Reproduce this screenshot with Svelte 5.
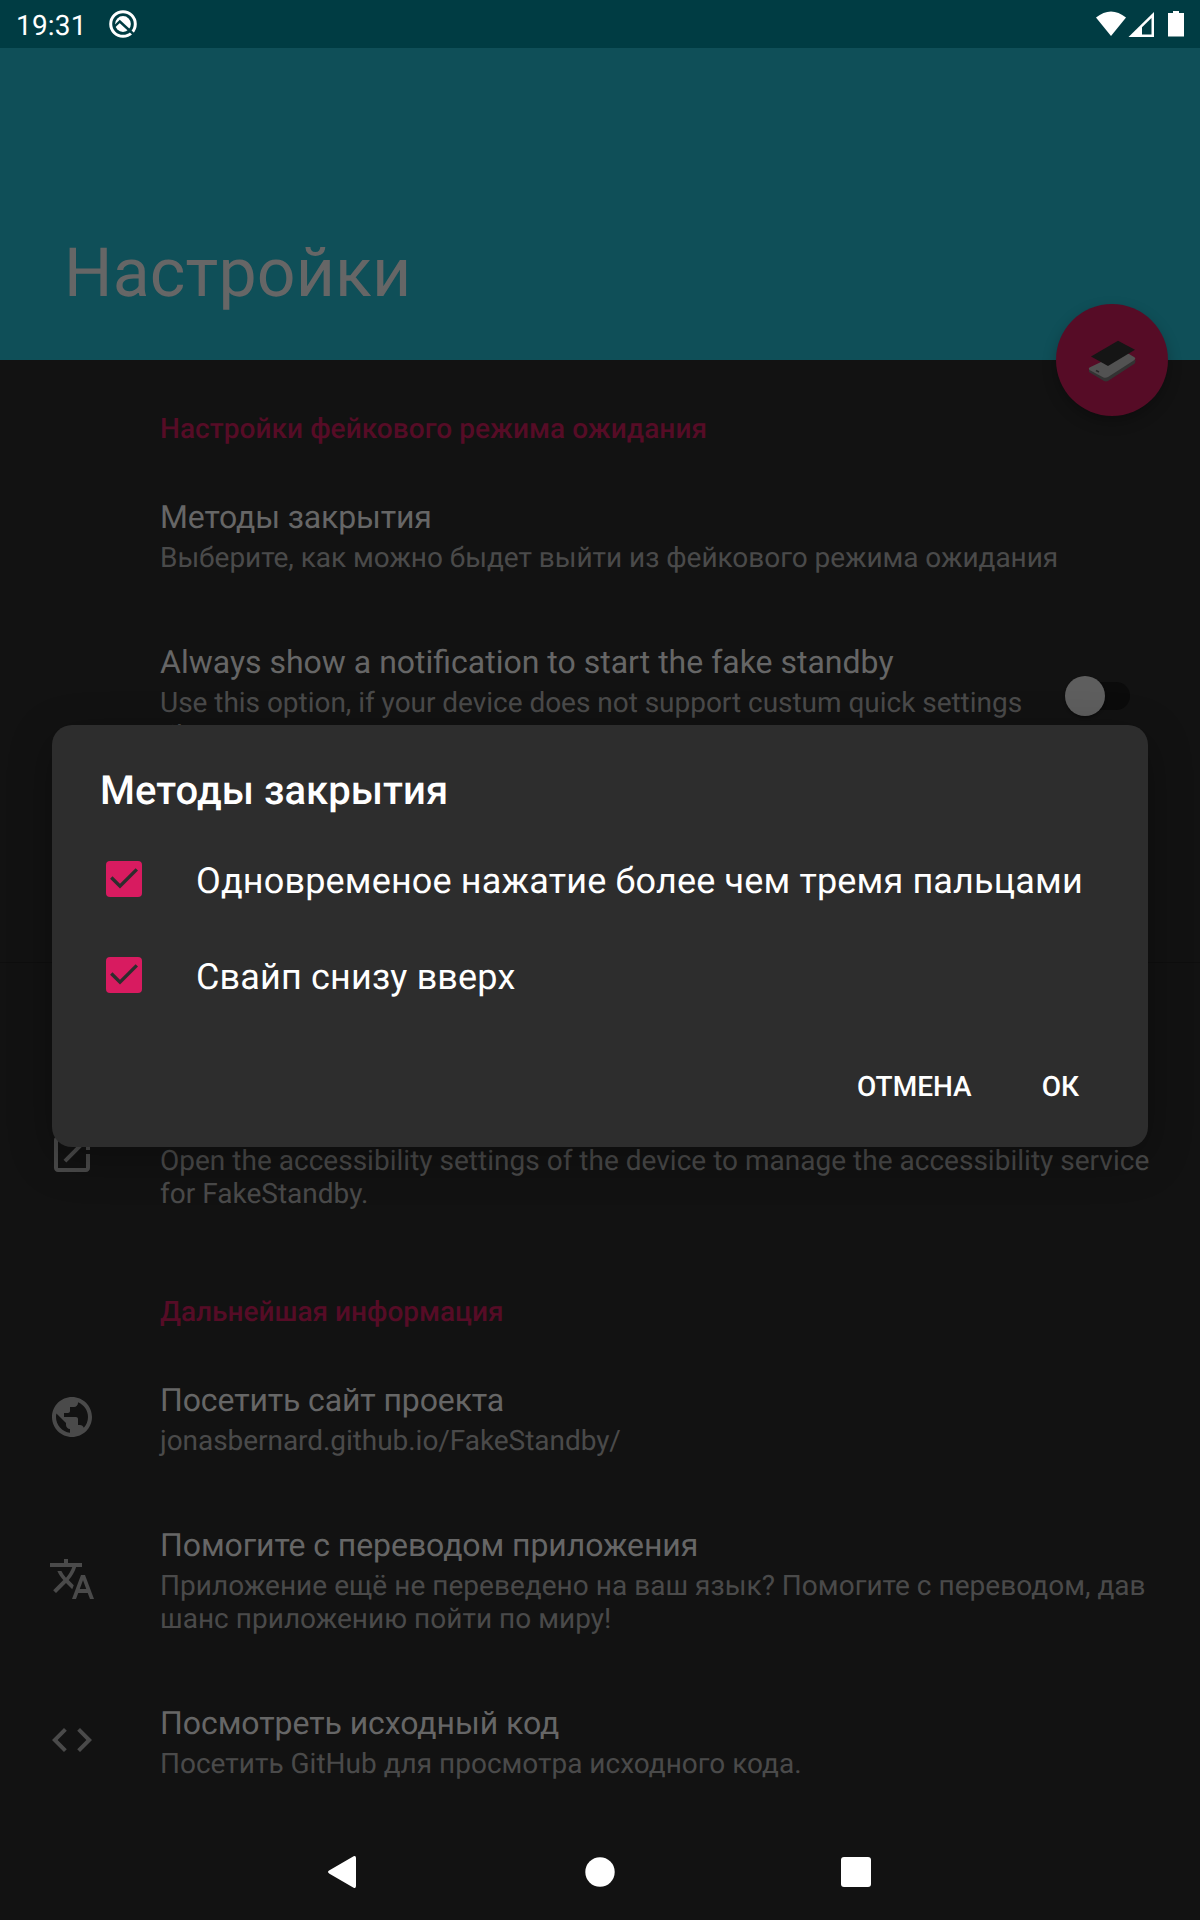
<script>
  const icons = {
    open: 'M19 19H5V5h7V3H5c-1.11 0-2 .9-2 2v14c0 1.1.89 2 2 2h14c1.1 0 2-.9 2-2v-7h-2v7zM14 3v2h3.59l-9.83 9.83 1.41 1.41L19 6.41V10h2V3h-7z',
    globe: 'M12 2C6.48 2 2 6.48 2 12s4.480 10 10 10 10-4.480 10-10S17.520 2 12 2zm-1 17.930c-3.950-.49-7-3.850-7-7.930 0-.62.08-1.210.21-1.790L9 15v1c0 1.100.9 2 2 2v1.930zm6.900-2.540c-.26-.81-1-1.390-1.900-1.390h-1v-3c0-.55-.45-1-1-1H8v-2h2c.55 0 1-.45 1-1V7h2c1.100 0 2-.9 2-2v-.41c2.930 1.190 5 4.060 5 7.410 0 2.080-.8 3.970-2.100 5.390z',
    translate: 'M12.87 15.07l-2.54-2.51.03-.03c1.74-1.94 2.98-4.17 3.71-6.53H17V4h-7V2H8v2H1v1.99h11.17C11.5 7.92 10.44 9.75 9 11.35 8.07 10.32 7.3 9.19 6.69 8h-2c.73 1.63 1.73 3.17 2.98 4.56l-5.09 5.02L4 19l5-5 3.11 3.11.76-2.04zM18.5 10h-2L12 22h2l1.12-3h4.75L21 22h2l-4.5-12zm-2.62 7l1.62-4.33L19.12 17h-3.24z',
    code: 'M9.4 16.6L4.8 12l4.6-4.6L8 6l-6 6 6 6 1.4-1.4zm5.2 0l4.6-4.6-4.6-4.6L16 6l6 6-6 6-1.4-1.4z'
  };

  // titleTrack and lineTrack are letter spacings in px
  const sections = [
    {
      name: 'standby',
      heading: 'Настройки фейкового режима ожидания',
      track: 0.06,
      rows: [
        {
          title: 'Методы закрытия',
          titleTrack: -0.15,
          lines: ['Выберите, как можно быдет выйти из фейкового режима ожидания'],
          lineTrack: -0.035
        },
        {
          title: 'Always show a notification to start the fake standby',
          lines: ['Use this option, if your device does not support custum quick settings', 'tiles.'],
          lineTrack: -0.03,
          toggle: true
        }
      ]
    },
    {
      name: 'access',
      heading: '',
      rows: [
        {
          title: '',
          icon: 'open',
          lines: ['Open the accessibility settings of the device to manage the accessibility service', 'for FakeStandby.'],
          lineTrack: 0.013
        }
      ]
    },
    {
      name: 'info',
      heading: 'Дальнейшая информация',
      rows: [
        {
          title: 'Посетить сайт проекта',
          titleTrack: -0.12,
          icon: 'globe',
          lines: ['jonasbernard.github.io/FakeStandby/'],
          lineTrack: -0.05
        },
        {
          title: 'Помогите с переводом приложения',
          titleTrack: -0.08,
          icon: 'translate',
          lines: ['Приложение ещё не переведено на ваш язык? Помогите с переводом, дав', 'шанс приложению пойти по миру!'],
          lineTrack: 0.025
        },
        {
          title: 'Посмотреть исходный код',
          titleTrack: -0.06,
          icon: 'code',
          lines: ['Посетить GitHub для просмотра исходного кода.']
        }
      ]
    }
  ];

  let options = $state([
    { label: 'Одновременое нажатие более чем тремя пальцами', checked: true },
    { label: 'Свайп снизу вверх', checked: true }
  ]);
</script>

<div class="screen">
  <div class="status">
    <span class="clock">19:31</span>
    <svg class="notif" width="28" height="28" viewBox="0 0 28 28">
      <circle cx="14" cy="14" r="12.300" fill="none" stroke="#fff" stroke-width="3" />
      <circle cx="14" cy="14" r="7.900" fill="#fff" />
      <path d="M5.500 16.500L10.800 11.500 26 25.500" fill="none" stroke="#003c43" stroke-width="2.400" />
    </svg>
    <svg class="signals" width="90" height="28" viewBox="0 0 90 28">
      <path d="M0 7.4Q15-4.6 30 7.4L15 26z" fill="#fff" />
      <path d="M58 2v25H32.5z" fill="#fff" />
      <path d="M55.5 8v16.5H46V17.2z" fill="#003c43" />
      <path d="M77 1h6v2h5v23.500H72V3h5z" fill="#fff" />
    </svg>
  </div>

  <header>
    <h1>Настройки</h1>
    <button class="fab" aria-label="FakeStandby">
      <svg width="52" height="44" viewBox="0 0 52 44">
        <path d="M3 29v3l15 9q2 .8 4 0l26-17q1.500-1 1.500-4z" fill="#333" />
        <path d="M3.500 27.500L36 12q2-.8 4 .3l8.500 5q1.600 1.200 0 2.700L22 37q-2.500 1.500-5 .3L3.500 30q-1.500-1.200 0-2.500z" fill="#525252" />
        <path d="M10 30.500l3 1.500" stroke="#2a2a2a" stroke-width="1.500" />
        <path d="M5 16.500L32 .8l17 9L22 26z" fill="#151515" />
      </svg>
    </button>
  </header>

  <main>
    {#each sections as section}
      <section class={section.name}>
        <h2 style:letter-spacing="{section.track ?? 0}px">{section.heading}</h2>
        {#each section.rows as row}
          <div class="row" class:tall={row.lines.length > 1}>
            <div class="icon">
              {#if row.icon}
                <svg width="48" height="48" viewBox="0 0 24 24"><path d={icons[row.icon]} fill="currentColor" /></svg>
              {/if}
            </div>
            <div class="text">
              <h3 style:letter-spacing="{row.titleTrack ?? 0}px">{row.title}</h3>
              {#each row.lines as line}<p style:letter-spacing="{row.lineTrack ?? 0}px">{line}</p>{/each}
            </div>
            {#if row.toggle}<div class="switch"><i></i></div>{/if}
          </div>
        {/each}
      </section>
    {/each}
  </main>

  <nav>
    <svg width="48" height="48" viewBox="0 0 48 48"><path d="M9.500 22.300L33.600 8.300Q36 7.500 36 10v28q0 2.500-2.400 1.700L9.500 25.700Q6.500 24 9.500 22.300z" /></svg>
    <svg width="48" height="48" viewBox="0 0 48 48"><circle cx="24" cy="24" r="14.700" /></svg>
    <svg width="48" height="48" viewBox="0 0 48 48"><rect x="9" y="9" width="30" height="30" rx="3" /></svg>
  </nav>

  <div class="dialog" role="dialog" aria-labelledby="dialog-title">
    <h4 id="dialog-title">Методы закрытия</h4>
    {#each options as option}
      <button class="option" role="checkbox" aria-checked={option.checked} onclick={() => (option.checked = !option.checked)}>
        <svg width="36" height="36" viewBox="0 0 36 36">
          <rect width="36" height="36" rx="4" fill="#d81b60" />
          {#if option.checked}<path d="M5.300 16.500L14 25.200 30.800 8.400" fill="none" stroke="#2d2d2d" stroke-width="3.400" />{/if}
        </svg>
        <span>{option.label}</span>
      </button>
    {/each}
    <div class="actions">
      <button>ОТМЕНА</button>
      <button>ОК</button>
    </div>
  </div>
</div>

<style>
  :global(body) {
    margin: 0;
    background: #121212;
  }
  .screen {
    position: relative;
    display: flex;
    flex-direction: column;
    width: 1200px;
    height: 1920px;
    overflow: hidden;
    background: #121212;
    font-family: Roboto, sans-serif;
    text-rendering: geometricPrecision;
  }
  h1, h2, h3, h4, p {
    margin: 0;
    font-weight: 400;
    white-space: nowrap;
  }
  button {
    border: 0;
    padding: 0;
    background: none;
    color: #fff;
    font-family: inherit;
    text-rendering: inherit;
  }
  .status {
    flex: none;
    display: flex;
    align-items: center;
    box-sizing: border-box;
    height: 48px;
    padding: 0 14px 0 16px;
    background: #003c43;
    color: #fff;
  }
  .clock {
    width: 93px;
    font-size: 28px;
    line-height: 46px;
    letter-spacing: 0.2px;
    padding-top: 4px;
  }
  .signals {
    margin-left: auto;
  }
  header {
    flex: none;
    position: relative;
    display: flex;
    align-items: flex-end;
    box-sizing: border-box;
    height: 312px;
    padding: 0 0 47px 64px;
    background: #0f4f58;
  }
  h1 {
    font-size: 68px;
    line-height: 80px;
    letter-spacing: 0.15px;
    color: #666;
  }
  .fab {
    position: absolute;
    right: 32px;
    bottom: -56px;
    display: flex;
    align-items: center;
    justify-content: center;
    box-sizing: border-box;
    width: 112px;
    height: 112px;
    padding-top: 3px;
    border-radius: 50%;
    background: #560c26;
    box-shadow: 0 6px 14px rgba(0, 0, 0, 0.25);
  }
  .access {
    margin-top: 178px;
    padding-bottom: 1px;
    border-top: 1px solid #0e0e0e;
  }
  h2 {
    box-sizing: border-box;
    height: 101px;
    padding: 52px 0 0 160px;
    font-size: 28px;
    font-weight: 500;
    line-height: 33px;
    color: #560c26;
  }
  .row {
    display: flex;
    align-items: center;
  }
  .icon {
    width: 112px;
    padding-left: 48px;
    line-height: 0;
    color: #4a4a4a;
  }
  .tall .icon,
  .tall .switch {
    margin-top: 2px;
  }
  .text {
    flex: 1;
    padding: 37px 0 32px;
  }
  h3 {
    height: 38px;
    margin-bottom: 5px;
    font-size: 32px;
    line-height: 38px;
    color: #666;
  }
  p {
    font-size: 28px;
    line-height: 33px;
    color: #4a4a4a;
  }
  .switch {
    width: 60px;
    height: 28px;
    margin-right: 70px;
    border-radius: 14px;
    background: #0b0b0b;
  }
  .switch i {
    display: block;
    width: 40px;
    height: 40px;
    margin: -6px 0 0 -5px;
    border-radius: 50%;
    background: #5e5e5e;
    box-shadow: 0 2px 3px rgba(0, 0, 0, 0.3);
  }
  nav {
    display: flex;
    justify-content: center;
    gap: 208px;
    margin-top: auto;
    padding-bottom: 24px;
    fill: #fff;
  }
  .dialog {
    position: absolute;
    top: 725px;
    left: 52px;
    box-sizing: border-box;
    width: 1096px;
    height: 422px;
    padding: 42px 48px 0;
    border-radius: 20px;
    background: #2d2d2d;
    box-shadow: 0 12px 44px rgba(0, 0, 0, 0.3);
    color: #fff;
  }
  h4 {
    height: 64px;
    font-size: 40px;
    font-weight: 500;
    line-height: 47px;
    letter-spacing: 0.07px;
  }
  .option {
    display: flex;
    align-items: center;
    gap: 54px;
    width: 100%;
    height: 96px;
    padding-left: 6px;
    font-size: 36px;
    letter-spacing: 0.16px;
    white-space: nowrap;
  }
  .option span {
    padding-top: 3px;
  }
  .actions {
    display: flex;
    justify-content: flex-end;
    gap: 70px;
    padding: 47px 21px 0 0;
  }
  .actions button {
    font-size: 28px;
    font-weight: 500;
    line-height: 33px;
  }
</style>
